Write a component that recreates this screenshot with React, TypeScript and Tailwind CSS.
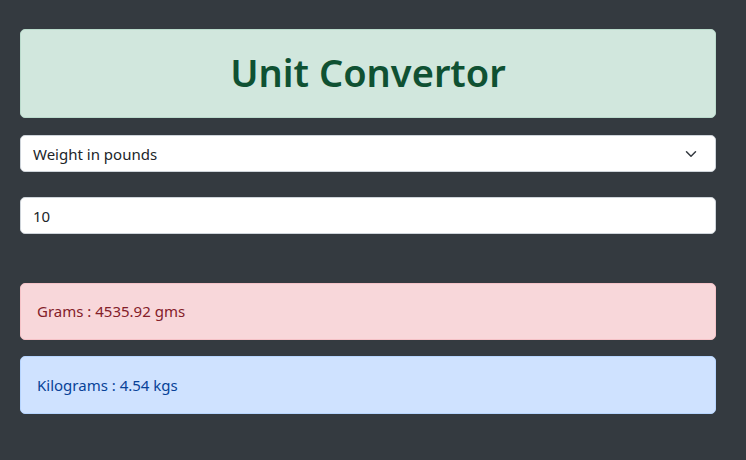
export default function App() {
  return (
    <div className="min-h-[460px] w-full bg-[#343a40] pt-[29px] pr-[30px] pb-10 pl-5 font-['Segoe_UI','Noto_Sans',sans-serif] text-[15px] text-[#212529]">
      <div className="h-[89px] rounded-[5px] border border-[#badbcc] bg-[#d1e7dd] px-4 pt-[18px] text-center">
        <h1 className="text-[38px] leading-[48px] font-semibold text-[#0f5132]">Unit Convertor</h1>
      </div>

      <div className="mt-[17px] flex h-[37px] items-center justify-between rounded-[5px] border border-[#ced4da] bg-white pr-4 pl-3">
        <span className="leading-6">Weight in pounds</span>
        <svg width="16" height="12" viewBox="0 0 16 16" className="mt-[1px]">
          <path d="m2 5 6 6 6-6" fill="none" stroke="#343a40" strokeWidth="2" strokeLinecap="round" strokeLinejoin="round" />
        </svg>
      </div>

      <div className="mt-[25px] flex h-[37px] items-center rounded-[5px] border border-[#ced4da] bg-white px-3">
        <span className="leading-6">10</span>
      </div>

      <div className="mt-[49px] flex h-[57px] items-center rounded-[5px] border border-[#f5c2c7] bg-[#f8d7da] px-4 text-[#842029]">
        Grams : 4535.92 gms
      </div>

      <div className="mt-[16px] flex h-[58px] items-center rounded-[5px] border border-[#b6d4fe] bg-[#cfe2ff] px-4 text-[#084298]">
        Kilograms : 4.54 kgs
      </div>
    </div>
  )
}
